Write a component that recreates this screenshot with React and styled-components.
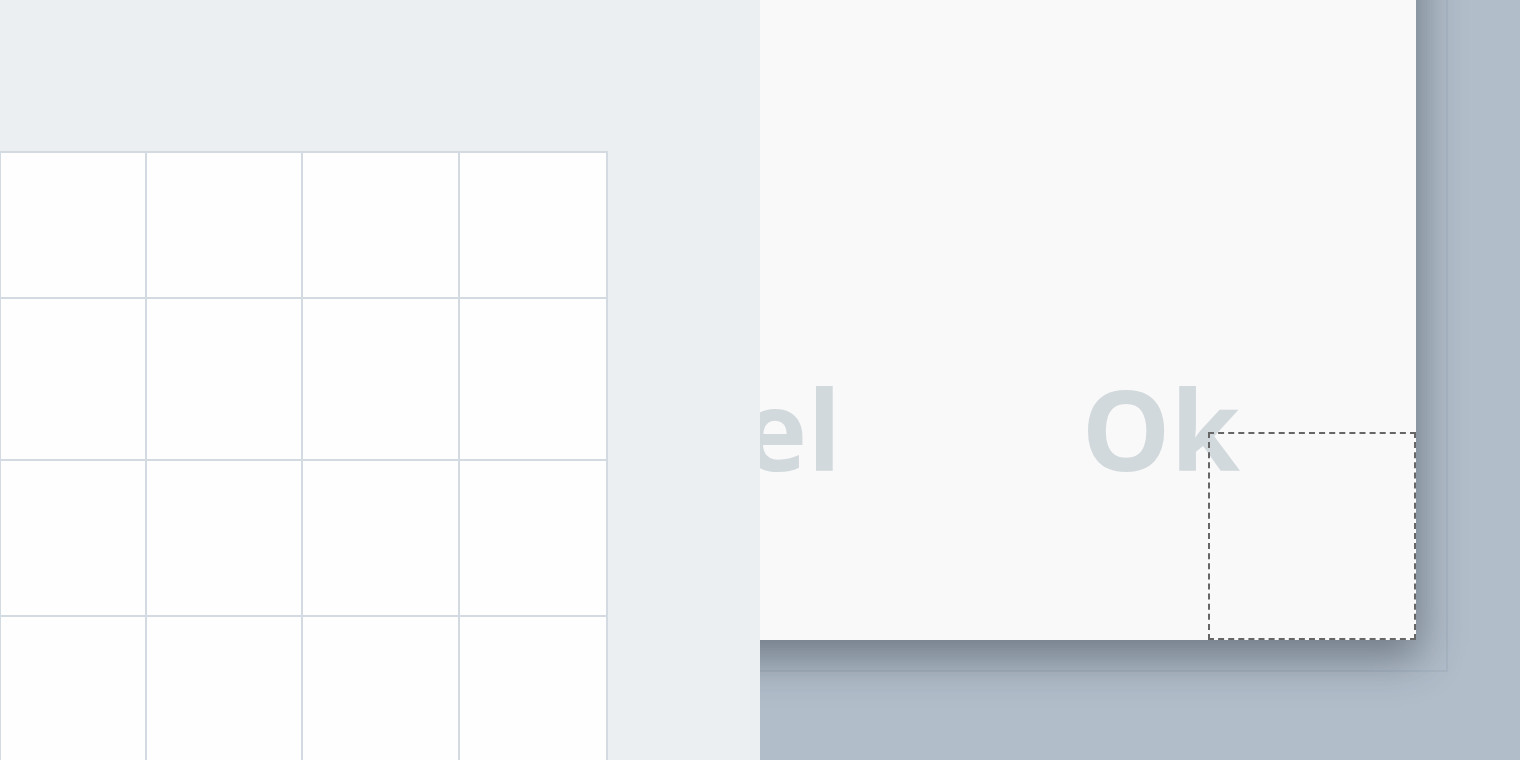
import React from 'react';
import styled, { createGlobalStyle } from 'styled-components';

const GlobalStyle = createGlobalStyle`
  html, body {
    margin: 0;
    padding: 0;
    overflow: hidden;
  }
  body {
    font-family: 'Open Sans', 'Liberation Sans', sans-serif;
  }
`;

const Page = styled.div`
  display: grid;
  grid-template-columns: 760px 760px;
  grid-template-rows: 760px;
  width: 1520px;
  height: 760px;
  overflow: hidden;
`;

// left side: light panel with the cell board, sits above the dialog stage
const Sidebar = styled.aside`
  position: relative;
  z-index: 1;
  background: #ebeff2;
  padding-top: 151px;
  box-sizing: border-box;
  overflow: hidden;
`;

const Board = styled.div`
  display: grid;
  width: 608px;
  grid-template-columns: 146px 156px 157px 148px;
  grid-template-rows: 146px 162px 156px 156px;
  border-top: 2px solid #d3dae1;
  border-left: 1px solid #d3dae1;
  box-sizing: border-box;
`;

const Cell = styled.div`
  background: #fefefe;
  border-right: 2px solid #d3dae1;
  border-bottom: 2px solid #d3dae1;
  box-sizing: border-box;
`;

// right side: dimmed backdrop holding the dialog
const Stage = styled.section`
  position: relative;
  z-index: 0;
  min-height: 0;
  display: flex;
  justify-content: flex-end;
  align-items: flex-end;
  padding: 0 72px 88px 0;
  box-sizing: border-box;
  background: #b1bdc9;
`;

const Frame = styled.div`
  flex-shrink: 0;
  width: 1088px;
  height: 772px;
  padding: 0 30px 30px 0;
  border: 2px solid rgba(40, 60, 80, 0.06);
  box-sizing: border-box;
`;

const Dialog = styled.div`
  position: relative;
  width: 100%;
  height: 100%;
  display: flex;
  flex-direction: column;
  justify-content: flex-end;
  background: #f9f9f9;
  box-shadow: 4px 18px 40px rgba(30, 40, 50, 0.45);
`;

const Footer = styled.div`
  display: flex;
  justify-content: flex-end;
  gap: 240px;
  padding: 0 176px 156px 0;
`;

const ActionButton = styled.button`
  background: none;
  border: none;
  padding: 0;
  font-family: 'Open Sans', 'Noto Sans', sans-serif;
  font-size: 112px;
  font-weight: 700;
  line-height: 1;
  color: #d2d9dc;
  cursor: pointer;
`;

const ResizeGuide = styled.div`
  position: absolute;
  right: 0;
  bottom: 0;
  width: 208px;
  height: 208px;
  border: 2px dashed #666;
  box-sizing: border-box;
  pointer-events: none;
`;

const cells = Array.from({ length: 16 }, (_, i) => i);

export default function App() {
  return (
    <>
      <GlobalStyle />
      <Page>
        <Sidebar>
          <Board>
            {cells.map((i) => (
              <Cell key={i} />
            ))}
          </Board>
        </Sidebar>
        <Stage>
          <Frame>
            <Dialog>
              <Footer>
                <ActionButton>Cancel</ActionButton>
                <ActionButton>Ok</ActionButton>
              </Footer>
              <ResizeGuide />
            </Dialog>
          </Frame>
        </Stage>
      </Page>
    </>
  );
}
